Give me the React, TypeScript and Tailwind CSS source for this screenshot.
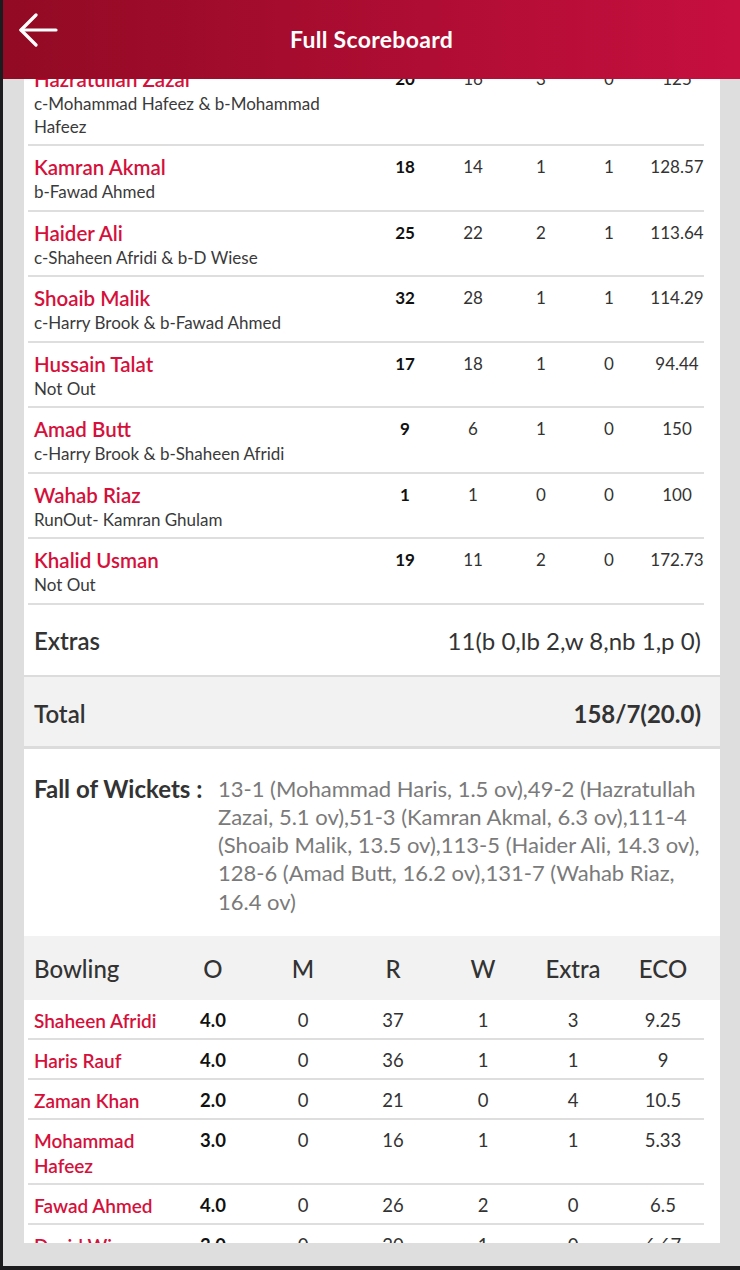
import React from "react";

type Batter = {
  name: string;
  out: string;
  r: string;
  b: string;
  fours: string;
  sixes: string;
  sr: string;
};

type Bowler = {
  name: string;
  o: string;
  m: string;
  r: string;
  w: string;
  extra: string;
  eco: string;
};

const batters: Batter[] = [
  { name: "Hazratullah Zazai", out: "c-Mohammad Hafeez & b-Mohammad Hafeez", r: "20", b: "16", fours: "3", sixes: "0", sr: "125" },
  { name: "Kamran Akmal", out: "b-Fawad Ahmed", r: "18", b: "14", fours: "1", sixes: "1", sr: "128.57" },
  { name: "Haider Ali", out: "c-Shaheen Afridi & b-D Wiese", r: "25", b: "22", fours: "2", sixes: "1", sr: "113.64" },
  { name: "Shoaib Malik", out: "c-Harry Brook & b-Fawad Ahmed", r: "32", b: "28", fours: "1", sixes: "1", sr: "114.29" },
  { name: "Hussain Talat", out: "Not Out", r: "17", b: "18", fours: "1", sixes: "0", sr: "94.44" },
  { name: "Amad Butt", out: "c-Harry Brook & b-Shaheen Afridi", r: "9", b: "6", fours: "1", sixes: "0", sr: "150" },
  { name: "Wahab Riaz", out: "RunOut- Kamran Ghulam", r: "1", b: "1", fours: "0", sixes: "0", sr: "100" },
  { name: "Khalid Usman", out: "Not Out", r: "19", b: "11", fours: "2", sixes: "0", sr: "172.73" },
];

const bowlers: Bowler[] = [
  { name: "Shaheen Afridi", o: "4.0", m: "0", r: "37", w: "1", extra: "3", eco: "9.25" },
  { name: "Haris Rauf", o: "4.0", m: "0", r: "36", w: "1", extra: "1", eco: "9" },
  { name: "Zaman Khan", o: "2.0", m: "0", r: "21", w: "0", extra: "4", eco: "10.5" },
  { name: "Mohammad Hafeez", o: "3.0", m: "0", r: "16", w: "1", extra: "1", eco: "5.33" },
  { name: "Fawad Ahmed", o: "4.0", m: "0", r: "26", w: "2", extra: "0", eco: "6.5" },
  { name: "David Wiese", o: "3.0", m: "0", r: "20", w: "1", extra: "0", eco: "6.67" },
];

// line breaks as the app wraps them
const fallOfWickets = [
  "13-1 (Mohammad Haris, 1.5 ov),49-2 (Hazratullah",
  "Zazai, 5.1 ov),51-3 (Kamran Akmal, 6.3 ov),111-4",
  "(Shoaib Malik, 13.5 ov),113-5 (Haider Ali, 14.3 ov),",
  "128-6 (Amad Butt, 16.2 ov),131-7 (Wahab Riaz,",
  "16.4 ov)",
];

const BatterRow = ({ p }: { p: Batter }) => (
  <div className="ml-[4px] mr-[16px] border-b-2 border-[#dedede] pl-[6px] pt-[9px] pb-[6.5px]">
    <div className="grid grid-cols-[1fr_68px_68px_68px_68px_68px] -mr-[7px]">
      <div className="min-w-0">
        <p className="text-[20.5px] leading-[25px] font-semibold text-[#d5103b]">{p.name}</p>
        <p className="max-w-[320px] text-[17px] leading-[23px] text-[#3a3a3a]">{p.out}</p>
      </div>
      <span className="text-center text-[17px] leading-[23px] font-bold text-[#111]">{p.r}</span>
      <span className="text-center text-[17px] leading-[23px] text-[#333]">{p.b}</span>
      <span className="text-center text-[17px] leading-[23px] text-[#333]">{p.fours}</span>
      <span className="text-center text-[17px] leading-[23px] text-[#333]">{p.sixes}</span>
      <span className="text-center text-[17px] leading-[23px] text-[#333]">{p.sr}</span>
    </div>
  </div>
);

const BowlerRow = ({ p }: { p: Bowler }) => (
  <div className="ml-[4px] mr-[16px] border-b-2 border-[#dedede] pl-[6px] pt-[8px] pb-[5px]">
    <div className="grid grid-cols-[134px_90px_90px_90px_90px_90px_90px] text-[18.5px] leading-[25px] text-[#333]">
      <span className="text-[19px] font-semibold text-[#d5103b]">{p.name}</span>
      <span className="text-center font-bold text-[#111]">{p.o}</span>
      <span className="text-center">{p.m}</span>
      <span className="text-center">{p.r}</span>
      <span className="text-center">{p.w}</span>
      <span className="text-center">{p.extra}</span>
      <span className="text-center">{p.eco}</span>
    </div>
  </div>
);

const App = () => {
  return (
    <div className="h-[1270px] w-[740px] flex flex-col overflow-hidden border-l-[3px] border-b-[4px] border-[#1c1c1f] bg-[#dedede] font-['Lato','Noto_Sans',sans-serif]">
      {/* Header */}
      <header className="relative z-10 h-[79px] shrink-0 flex items-center justify-center bg-gradient-to-r from-[#920a24] to-[#c60f3f]">
        <button className="absolute left-[12px] top-[13px] text-white">
          <svg width="44" height="36" viewBox="0 0 44 36" fill="none" stroke="currentColor" strokeWidth="3.2" strokeLinecap="round" strokeLinejoin="round">
            <path d="M41 17 H6" />
            <path d="M21 2 L6 17 L21 32" />
          </svg>
        </button>
        <h1 className="text-[23px] font-bold text-white tracking-[0.3px]">Full Scoreboard</h1>
      </header>

      {/* Scroll area */}
      <main className="flex-1 min-h-0 overflow-hidden pl-[21px] pr-[20px] pb-[23px]">
        <div className="h-full overflow-hidden">
          <div className="-mt-[21.5px] bg-white">
            {batters.map((p) => (
              <BatterRow key={p.name} p={p} />
            ))}

            {/* Extras */}
            <div className="flex items-center justify-between pl-[10px] pr-[19px] pt-[22px] pb-[20px] text-[24px] leading-[28px] text-[#333]">
              <span className="font-semibold">Extras</span>
              <span>11(b 0,lb 2,w 8,nb 1,p 0)</span>
            </div>

            {/* Total */}
            <div className="flex items-center justify-between border-t-2 border-b-[3px] border-[#dcdcdc] bg-[#f2f2f2] pl-[10px] pr-[19px] pt-[23px] pb-[18px] text-[24px] leading-[28px] text-[#333]">
              <span className="font-semibold">Total</span>
              <span className="font-bold">158/7(20.0)</span>
            </div>

            {/* Fall of wickets */}
            <div className="flex pl-[10px] pr-[10px] pt-[26px] pb-[20px] leading-[28.3px]">
              <span className="w-[184px] shrink-0 text-[24px] font-bold text-[#333]">Fall of Wickets :</span>
              <p className="text-[22px] text-[#7a7a7a] whitespace-nowrap">
                {fallOfWickets.map((line) => (
                  <span key={line} className="block">
                    {line}
                  </span>
                ))}
              </p>
            </div>

            {/* Bowling */}
            <div className="bg-[#f2f2f2] pl-[10px] pt-[19px] pb-[17px]">
              <div className="grid grid-cols-[134px_90px_90px_90px_90px_90px_90px] text-[24px] leading-[28px] font-medium text-[#333]">
                <span>Bowling</span>
                <span className="text-center">O</span>
                <span className="text-center">M</span>
                <span className="text-center">R</span>
                <span className="text-center">W</span>
                <span className="text-center">Extra</span>
                <span className="text-center">ECO</span>
              </div>
            </div>
            {bowlers.map((p) => (
              <BowlerRow key={p.name} p={p} />
            ))}
          </div>
        </div>
      </main>
    </div>
  );
};

export default App;
